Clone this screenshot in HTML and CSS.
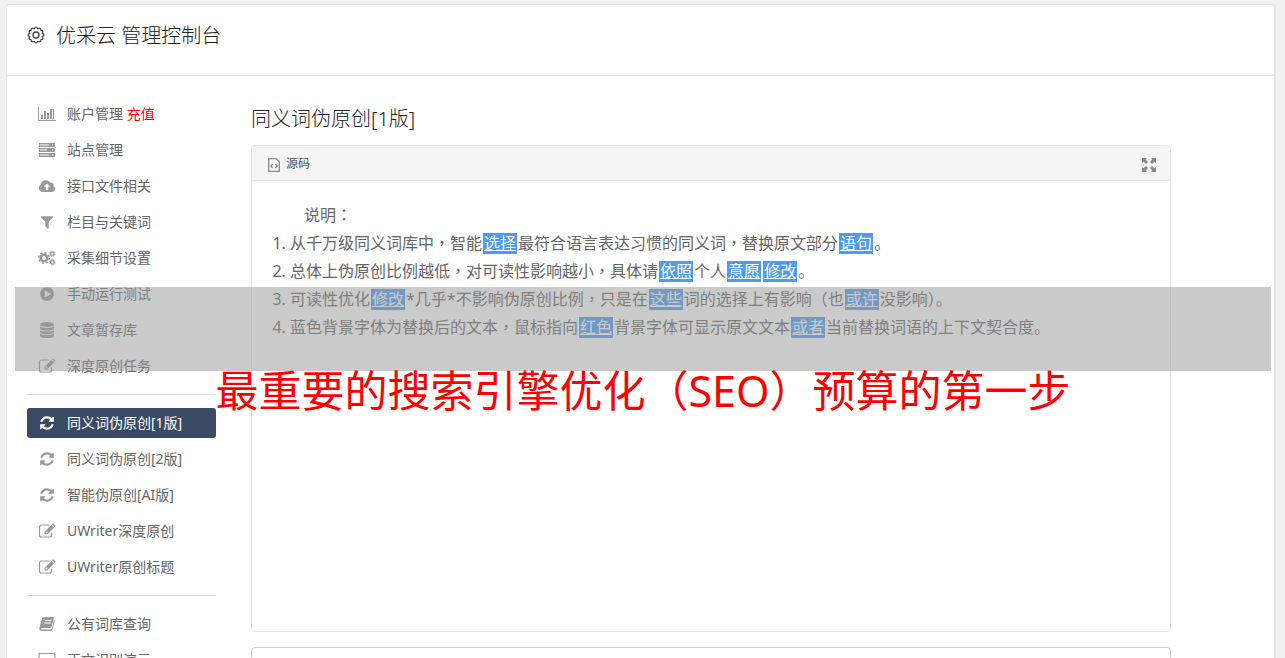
FILE: index.html
```html
<!DOCTYPE html>
<html lang="zh-CN">
<head>
  <meta charset="UTF-8">
  <meta name="viewport" content="width=device-width, initial-scale=1">
  <title>优采云 管理控制台</title>
  <link rel="stylesheet" href="styles.css">
</head>
<body>

  <!-- iconos compartidos -->
  <svg class="sprite" aria-hidden="true">
    <symbol id="i-refresh" viewBox="0 0 1792 1792"><path d="M1639 1056q0 5-1 7-64 268-268 434.5t-478 166.5q-146 0-282.5-55t-243.5-157l-129 129q-19 19-45 19t-45-19-19-45v-448q0-26 19-45t45-19h448q26 0 45 19t19 45-19 45l-137 137q71 66 161 102t187 36q134 0 250-65t186-179q11-17 53-117 8-23 30-23h192q13 0 22.5 9.5t9.5 22.5zm25-800v448q0 26-19 45t-45 19h-448q-26 0-45-19t-19-45 19-45l138-138q-148-137-349-137-134 0-250 65t-186 179q-11 17-53 117-8 23-30 23h-199q-13 0-22.5-9.5t-9.5-22.5v-7q65-268 270-434.5t480-166.5q146 0 284 55.5t245 156.5l130-129q19-19 45-19t45 19 19 45z"/></symbol>
    <symbol id="i-edit" viewBox="0 0 18 16">
      <path d="M11.5 2H3.5a2 2 0 0 0-2 2v8a2 2 0 0 0 2 2h8a2 2 0 0 0 2-2V9.500" fill="none" stroke="currentColor" stroke-width="1.2"/>
      <path fill-rule="evenodd" d="M6.6 8.7 13.4 1.9l2.7 2.7-6.8 6.8H6.6zM7.5 9.1v.7h.8v.8h.7l.8-.8-1.5-1.5zM14 1.3l.5-.5q.6-.5 1.2 0l1.500 1.500q.5.6 0 1.200l-.5.5z"/>
    </symbol>
  </svg>

  <div class="panel">
    <header class="panel-header">
      <svg class="gear" viewBox="0 0 18 18" aria-hidden="true">
        <path d="M7.300 2.700 Q9 -.6 10.700 2.700 Q14.200 1.400 13.800 4.200 Q17 4.200 15.300 7.300 Q18.600 9 15.300 10.700 Q17 13.800 13.800 13.800 Q14.200 16.600 10.700 15.300 Q9 18.600 7.300 15.300 Q3.800 16.600 4.200 13.800 Q1 13.800 2.700 10.700 Q-.6 9 2.700 7.300 Q1 4.200 4.200 4.200 Q3.800 1.400 7.300 2.700Z"/>
        <circle cx="9" cy="9" r="3"/>
      </svg>
      <h1>优采云 管理控制台</h1>
    </header>

    <div class="panel-body">
      <nav class="sidebar">
        <a href="#"><svg class="icon" viewBox="0 0 18 16"><path d="M0 1h1v13h17v1H0zM3 9h2v4H3zM6 5h2v8H6zM9 7h2v6H9zM12 3h2v10h-2zM15 3h1v10h-1z"/></svg><span>账户管理 <em class="recharge">充值</em></span></a>
        <a href="#"><svg class="icon" viewBox="0 0 18 16"><path fill-rule="evenodd" d="M1 1h16v4H1zM2 2.500v1h9v-1zM14 2.500v1h1v-1zM1 6h16v4H1zM2 7.500v1h7v-1zM14 7.500v1h1v-1zM1 11h16v4H1zM2 12.500v1h9v-1zM14 12.500v1h1v-1z"/></svg><span>站点管理</span></a>
        <a href="#"><svg class="icon" viewBox="0 0 18 16"><path fill-rule="evenodd" d="M4.500 14A4 4 0 0 1 3 6.500 5 5 0 0 1 12.200 4.600 2.700 2.700 0 0 1 15.500 8 3.200 3.200 0 0 1 14.500 14ZM7.800 12h2.400V8.800h2L9 5.500 5.800 8.800h2z"/></svg><span>接口文件相关</span></a>
        <a href="#"><svg class="icon" viewBox="0 0 1792 1792"><path d="M1595 295q17 41-14 70l-493 493v742q0 42-39 59-13 5-25 5-27 0-45-19l-256-256q-19-19-19-45v-486l-493-493q-31-29-14-70 17-39 59-39h1280q42 0 59 39z"/></svg><span>栏目与关键词</span></a>
        <a href="#"><svg class="icon" viewBox="0 0 18 16">
          <circle cx="6" cy="8" r="3.300" fill="none" stroke="currentColor" stroke-width="2.400"/>
          <circle cx="6" cy="8" r="5.200" fill="none" stroke="currentColor" stroke-width="1.600" stroke-dasharray="2.040 2.040"/>
          <circle cx="14.300" cy="3.800" r="1.800" fill="none" stroke="currentColor" stroke-width="1.300"/>
          <circle cx="14.300" cy="3.800" r="2.800" fill="none" stroke="currentColor" stroke-dasharray="1.100 1.100"/>
          <circle cx="14.300" cy="12.300" r="1.800" fill="none" stroke="currentColor" stroke-width="1.300"/>
          <circle cx="14.300" cy="12.300" r="2.800" fill="none" stroke="currentColor" stroke-dasharray="1.100 1.100"/>
        </svg><span>采集细节设置</span></a>
        <a href="#"><svg class="icon" viewBox="0 0 1792 1792"><path d="M896 128q209 0 385.500 103t279.500 279.500 103 385.500-103 385.500-279.500 279.500-385.500 103-385.500-103-279.500-279.500-103-385.500 103-385.500 279.500-279.500 385.500-103zm384 823q32-18 32-55t-32-55l-544-320q-31-19-64-1-32 19-32 56v640q0 37 32 56 16 8 32 8 17 0 32-9z"/></svg><span>手动运行测试</span></a>
        <a href="#"><svg class="icon" viewBox="0 0 18 16"><ellipse cx="9" cy="2.500" rx="7" ry="2.500"/><path d="M2 4.300q2 1.700 7 1.700t7-1.700v1.900q0 2.400-7 2.400T2 6.200zM2 7.900q2 1.700 7 1.700t7-1.700v1.900q0 2.400-7 2.400T2 9.800zM2 11.500q2 1.700 7 1.700t7-1.700v1.900Q16 16 9 16t-7-2.600z"/></svg><span>文章暂存库</span></a>
        <a href="#"><svg class="icon"><use href="#i-edit"/></svg><span>深度原创任务</span></a>
        <hr>
        <a href="#" class="active"><svg class="icon"><use href="#i-refresh"/></svg><span>同义词伪原创[1版]</span></a>
        <a href="#"><svg class="icon"><use href="#i-refresh"/></svg><span>同义词伪原创[2版]</span></a>
        <a href="#"><svg class="icon"><use href="#i-refresh"/></svg><span>智能伪原创[AI版]</span></a>
        <a href="#"><svg class="icon"><use href="#i-edit"/></svg><span>UWriter深度原创</span></a>
        <a href="#"><svg class="icon"><use href="#i-edit"/></svg><span>UWriter原创标题</span></a>
        <hr>
        <a href="#"><svg class="icon" viewBox="0 0 18 16"><path fill-rule="evenodd" d="M6 1h9q1.200.2.900 1.500L13.500 11q-.4 1-1.500 1H4q-1.200 0-1 .9.200.6 1 .6h8.700q.8 0 1.100-.8L16 4q1 .6.700 1.600l-2.500 8Q13.800 15 12.500 15H3.500Q1.200 14.800 1.300 12L4 2.800Q4.600 1 6 1zM7 4l-.3 1h6.500l.3-1zM6.400 6.500l-.3 1h6.500l.3-1z"/></svg><span>公有词库查询</span></a>
        <a href="#"><svg class="icon" viewBox="0 0 18 16"><path d="M1.500 1h15q1 0 1 1v9q0 1-1 1H11v2h2v1H5v-1h2v-2H1.500q-1 0-1-1V2q0-1 1-1zm.1 1v9h14.800V2z" fill-rule="evenodd"/></svg><span>正文识别演示</span></a>
      </nav>

      <main class="content">
        <h2>同义词伪原创[1版]</h2>

        <section class="editor">
          <div class="toolbar">
            <button type="button" class="tool">
              <svg class="tool-icon source" viewBox="0 0 12 14"><path d="M.7.7h7.600l3 3v9.600H.7z"/><path d="M4.700 6 2.800 8l1.900 2M7.300 6l1.900 2-1.900 2"/></svg>
              源码
            </button>
            <button type="button" class="tool" aria-label="全屏">
              <svg class="tool-icon expand" viewBox="0 0 14 14"><path d="M0 0h5L3.700 1.500 6 4 4 6 1.500 3.700 0 5zM14 0v5l-1.500-1.300L10 6 8 4l2.300-2.500L9 0zM0 14V9l1.500 1.300L4 8l2 2-2.300 2.500L5 14zM14 14H9l1.300-1.500L8 10l2-2 2.500 2.300L14 9z"/></svg>
            </button>
          </div>
          <div class="editor-text">
            <p>说明<span lang="zh-TW">：</span></p>
            <ol>
              <li>从千万级同义词库中<span lang="zh-TW">，</span>智能<mark>选择</mark>最符合语言表达习惯的同义词<span lang="zh-TW">，</span>替换原文部分<mark>语句</mark>。</li>
              <li>总体上伪原创比例越低<span lang="zh-TW">，</span>对可读性影响越小<span lang="zh-TW">，</span>具体请<mark>依照</mark>个人<mark>意愿</mark><mark>修改</mark>。</li>
              <li>可读性优化<mark>修改</mark>*几乎*不影响伪原创比例<span lang="zh-TW">，</span>只是在<mark>这些</mark>词的选择上有影响（也<mark>或许</mark>没影响）。</li>
              <li>蓝色背景字体为替换后的文本<span lang="zh-TW">，</span>鼠标指向<mark>红色</mark>背景字体可显示原文文本<mark>或者</mark>当前替换词语的上下文契合度。</li>
            </ol>
          </div>
        </section>

        <textarea class="result" aria-label="结果"></textarea>
      </main>
    </div>
  </div>

  <div class="banner">
    <div class="banner-strip"></div>
    <p class="banner-title">最重要的搜索引擎优化（SEO）预算的第一步</p>
  </div>

</body>
</html>
```
FILE: styles.css
```css
* {
  box-sizing: border-box;
}

body {
  margin: 0;
  padding: 4px 9px 0 6px;
  height: 100vh;
  overflow: hidden;
  position: relative;
  background: #f1f1f1;
  color: #666;
  font-family: "Noto Sans", "Noto Sans CJK SC", sans-serif;
  font-size: 14px;
}

h1, h2, p, ol {
  margin: 0;
  font-weight: inherit;
}

/* puntuación centrada en su celda */
[lang="zh-TW"] {
  font-family: "Noto Sans CJK TC", sans-serif;
  line-height: 1;
}

.sprite {
  display: none;
}

.panel {
  background: #fff;
  border: 1px solid #e5e5e5;
  border-right-width: 2px;
  border-radius: 4px;
}

.panel-header {
  display: flex;
  align-items: flex-start;
  gap: 11px;
  height: 71px;
  padding: 16px 20px;
  border-bottom: 1px solid #e5e5e5;
  color: #222;
}

.panel-header h1 {
  font-size: 20px;
  font-weight: 300;
  line-height: 30px;
}

.gear {
  width: 18px;
  height: 18px;
  margin-top: 5px;
  fill: none;
  stroke: #444;
  stroke-width: 1.3;
  stroke-linejoin: round;
}

.panel-body {
  display: flex;
  gap: 35px;
  padding: 23px 103px 20px 20px;
}

/* menú lateral */
.sidebar {
  display: flex;
  flex-direction: column;
  flex: none;
  gap: 6px;
  width: 189px;
}

.sidebar a {
  display: flex;
  align-items: center;
  gap: 11px;
  height: 30px;
  padding: 0 11px;
  border-radius: 3px;
  color: #666;
  line-height: 30px;
  text-decoration: none;
  white-space: nowrap;
}

.sidebar a.active {
  background: #3a4a64;
  color: #fff;
}

.sidebar hr {
  width: 100%;
  margin: 7px 0;
  border: 0;
  border-top: 1px solid #ddd;
}

.icon {
  flex: none;
  width: 18px;
  height: 16px;
  color: #999;
  fill: currentColor;
}

.sidebar .active .icon {
  color: #fff;
}

.recharge {
  color: #f00;
  font-style: normal;
}

/* editor */
.content {
  flex: 1;
  min-width: 0;
}

.content h2 {
  margin: 4px 0 11px;
  color: #222;
  font-size: 20px;
  font-weight: 300;
  line-height: 31px;
}

.editor {
  min-height: 487px;
  border: 1px solid #e5e5e5;
  border-radius: 4px;
}

.toolbar {
  display: flex;
  justify-content: space-between;
  height: 35px;
  padding: 0 14px 0 16px;
  background: #f5f5f5;
  border-bottom: 1px solid #e5e5e5;
  border-radius: 3px 3px 0 0;
}

.tool {
  display: flex;
  align-items: center;
  gap: 6px;
  padding: 0;
  border: 0;
  background: none;
  color: #555;
  font-family: inherit;
  font-size: 12px;
}

.tool-icon {
  height: 14px;
  margin-top: 4px;
}

.source {
  width: 12px;
  fill: none;
  stroke: #888;
  stroke-width: 1.3;
}

.expand {
  width: 14px;
  fill: #888;
}

.editor-text {
  padding: 20px;
  font-size: 16px;
  line-height: 28px;
}

.editor-text p {
  text-indent: 2em;
}

.editor-text ol {
  padding-left: 18px;
}

.editor-text mark {
  display: inline-block;
  margin: 0 1px;
  padding: 0 1px;
  background: #4a9cf5;
  color: #fff;
  line-height: 21px;
  text-decoration: underline;
}

.result {
  display: block;
  width: 100%;
  height: 120px;
  margin-top: 15px;
  border: 1px solid #ccc;
  border-radius: 4px;
  resize: none;
}

/* franja superpuesta */
.banner {
  position: absolute;
  top: 287px;
  left: 15px;
  right: 14px;
}

.banner-strip {
  height: 84px;
  background: rgba(150, 150, 150, 0.5);
}

.banner-title {
  color: #f00;
  font-size: 43px;
  line-height: 40px;
  text-align: center;
  white-space: nowrap;
}
```
